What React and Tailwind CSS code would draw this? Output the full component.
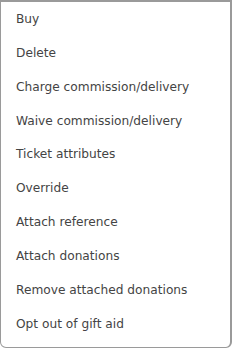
import React from "react";

const items = [
  "Buy",
  "Delete",
  "Charge commission/delivery",
  "Waive commission/delivery",
  "Ticket attributes",
  "Override",
  "Attach reference",
  "Attach donations",
  "Remove attached donations",
  "Opt out of gift aid",
];

const App = () => {
  return (
    <div className="w-[232px] h-[348px] bg-white">
      <ul
        className="h-[348px] w-[232px] border border-t-2 border-r-2 border-[#9a9a9a] rounded-b-[6px] bg-white text-[#444] text-[12.2px]"
        style={{ fontFamily: '"DejaVu Sans", Verdana, sans-serif' }}
      >
        {items.map((item, index) => (
          <li key={index} className="h-[33.9px] flex items-center pl-[15px] leading-none whitespace-nowrap">
            {item}
          </li>
        ))}
      </ul>
    </div>
  );
};

export default App;
